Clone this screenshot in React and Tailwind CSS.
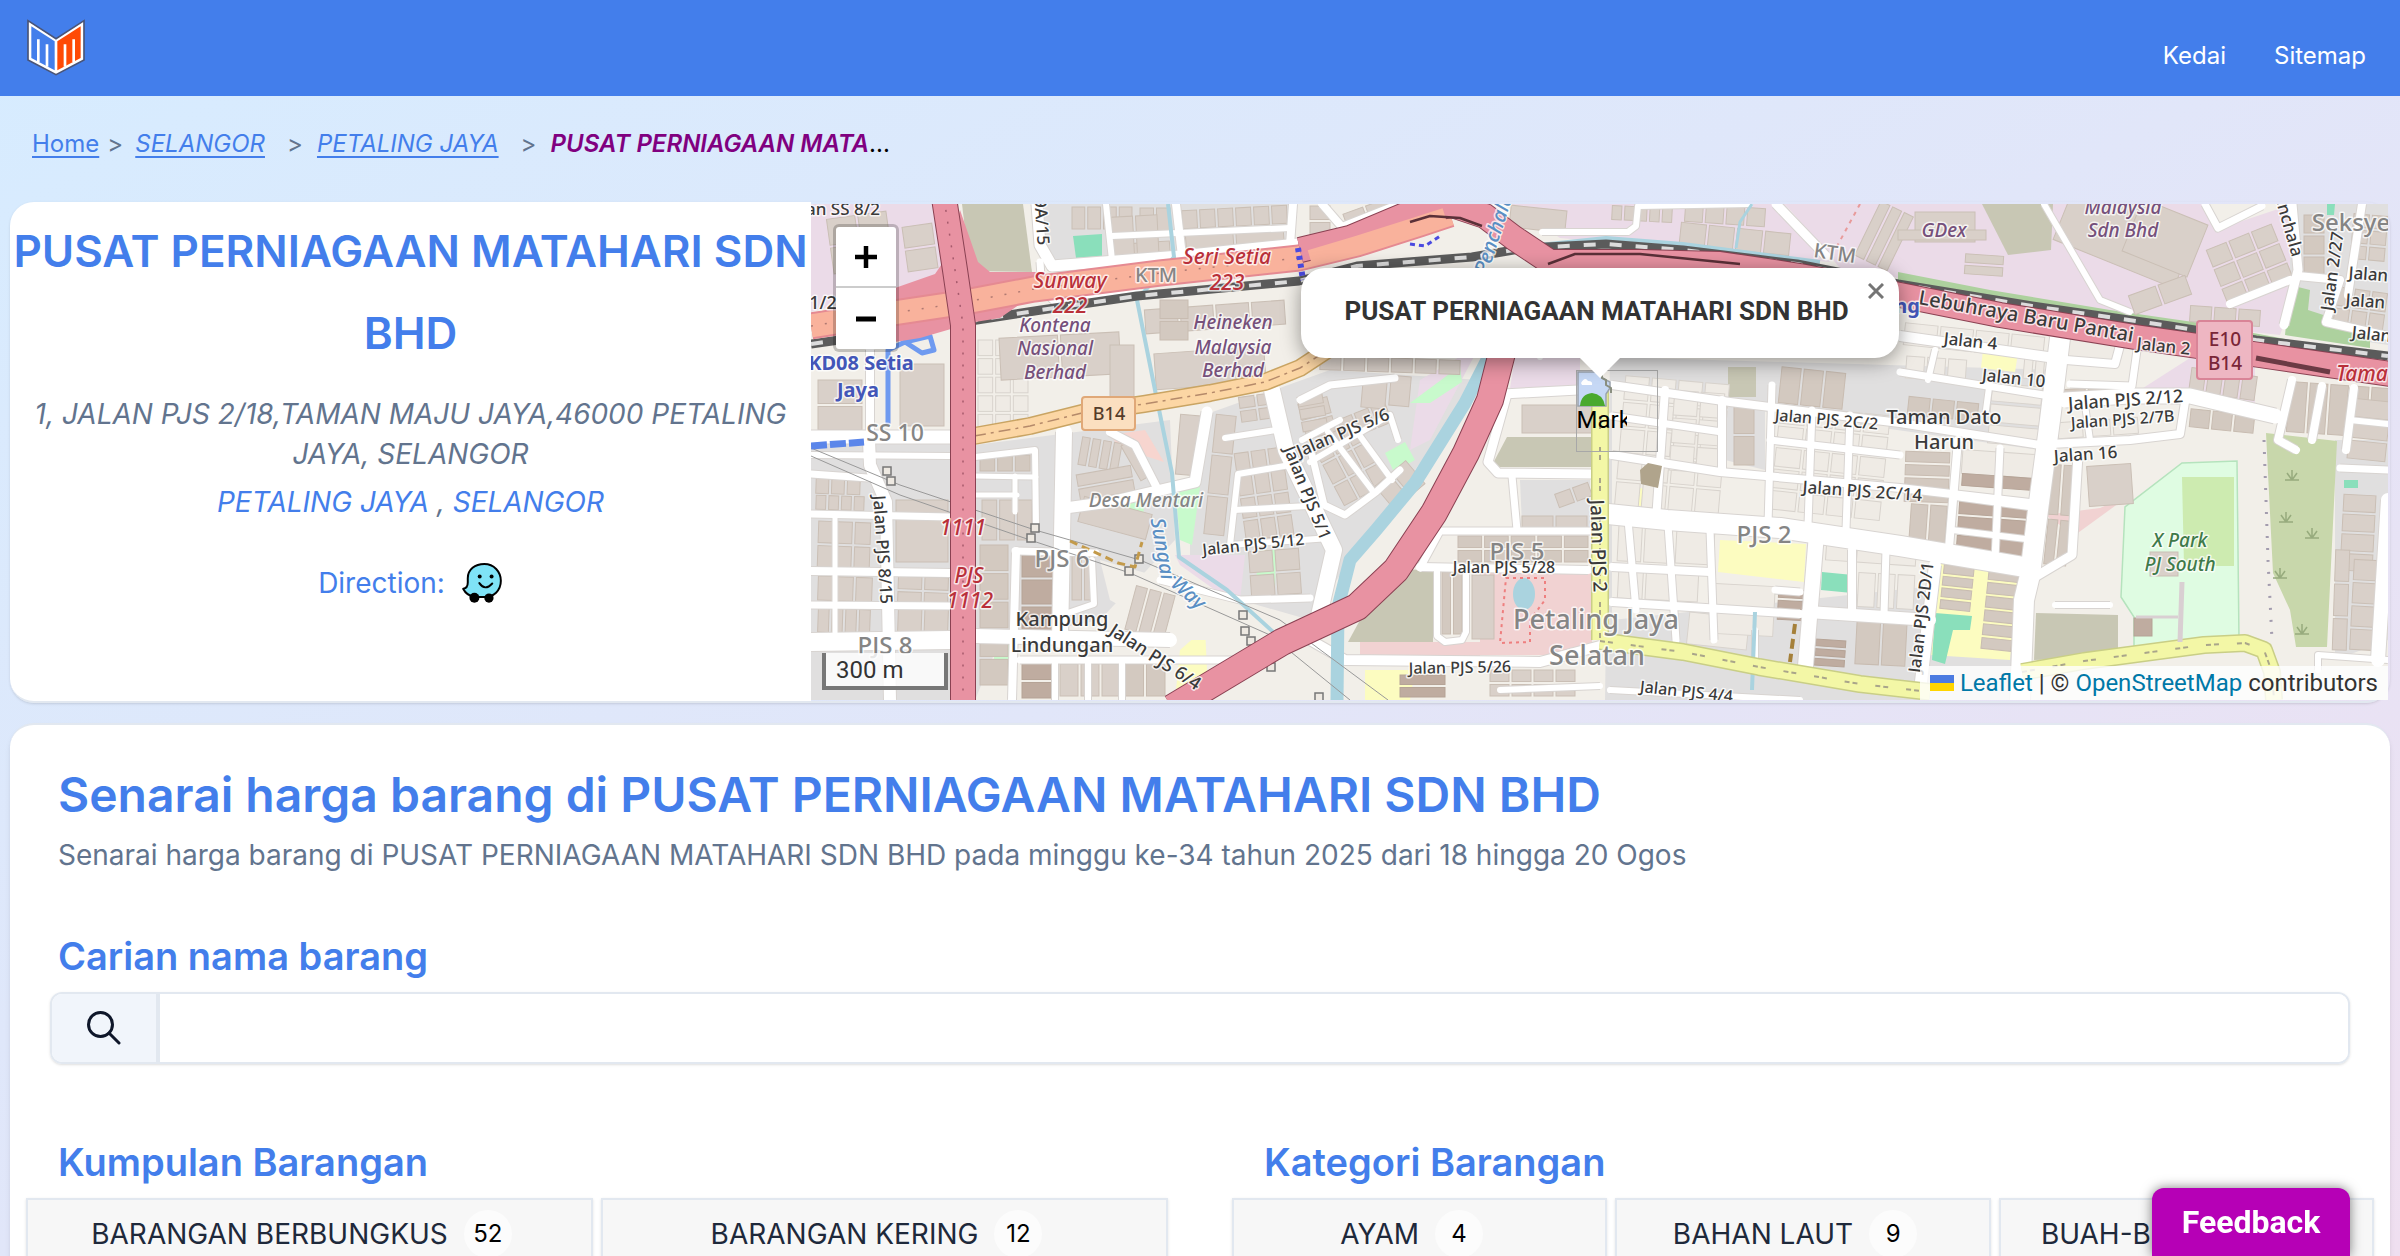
import React from "react";

/* ---------- map data: x,y are map units, the tile area spans 811..2388 by 204..700 ---------- */

const AREAS = [
  ["#e0dfdf", "811,440 950,440 950,700 811,700"],
  ["#e0dfdf", "975,445 1170,420 1175,540 1100,620 1000,640 975,700"],
  ["#e0dfdf", "1040,204 1290,204 1290,245 1045,265"],
  ["#e0dfdf", "1190,420 1330,370 1480,380 1350,560 1310,620 1240,600 1190,560"],
  ["#ebdbe8", "811,204 935,204 948,275 811,312"],
  ["#c8c7b4", "962,204 1023,204 1032,272 970,271"],
  ["#ebdbe8", "1510,204 1785,204 1830,262 1560,238"],
  ["#ebdbe8", "1785,204 2205,204 2215,230 2290,205 2300,280 2280,335 2185,325 2030,300 1840,268"],
  ["#ebdbe8", "2140,390 2190,358 2255,367 2255,405 2190,395"],
  ["#ebdbe8", "1420,380 1480,345 1430,440 1410,450"],
  ["#ebdbe8", "1515,357 1580,357 1580,387 1510,388"],
  ["#ebdbe8", "1175,555 1245,555 1240,600 1215,590 1180,565"],
  ["#e0dfdf", "1610,357 2060,370 2050,440 2030,560 2020,700 1605,700"],
  ["#f2efe9", "1612,390 2040,450 2030,560 1990,580 1612,620"],
  ["#e0dfdf", "2335,440 2388,440 2388,640 2335,660"],
  ["#e0dfdf", "2290,204 2388,204 2388,345 2290,330"],
  ["#e0dfdf", "1520,480 1590,480 1590,530 1522,525"],
  ["#f1d2d2", "1480,572 1592,572 1592,655 1480,655"],
  ["#f1d2d2", "1360,642 1480,642 1480,660 1360,660"],
  ["#f7d5cf", "1110,435 1145,430 1164,462 1120,448"],
  ["#f1d2d2", "2045,515 2100,508 2130,495 2075,535"],
  ["#e0dfdf", "1725,370 1765,372 1765,470 1725,460"],
  ["#fcfcc0", "1720,540 1806,544 1804,582 1718,572"],
  ["#fcfcc0", "1638,488 1663,490 1661,510 1635,505"],
  ["#fcfcc0", "1365,670 1415,670 1410,700 1365,700"],
  ["#fcfcc0", "1940,560 2018,570 2010,660 1930,655"],
  ["#fcfcc0", "1983,350 2018,353 2015,372 1981,368"],
  ["#fcfcc0", "1180,650 1205,628 1208,690 1175,700"],
  ["#c8facc", "1410,403 1460,366 1462,382 1430,403"],
  ["#c8facc", "1385,453 1405,442 1415,460 1394,472"],
  ["#c8facc", "1175,487 1200,487 1192,545 1180,540"],
  ["#c8facc", "1258,550 1276,550 1275,588 1256,586"],
  ["#c8facc", "994,638 1012,638 1013,670 994,668"],
  ["#c8facc", "1100,500 1145,492 1143,520 1100,507"],
  ["#8adfbb", "1073,236 1102,234 1102,256 1076,258"],
  ["#8adfbb", "1822,572 1853,575 1852,593 1821,590"],
  ["#8adfbb", "1935,613 1972,616 1970,630 1953,630 1945,664 1932,660"],
  ["#8adfbb", "2344,480 2358,480 2358,488 2344,488"],
  ["#8adfbb", "2327,204 2335,204 2334,215 2327,215"],
  ["#c8c7b4", "1507,437 1593,437 1593,467 1491,467"],
  ["#c8c7b4", "1388,569 1433,570 1433,642 1348,642"],
  ["#c8c7b4", "1982,204 2053,204 2051,250 2008,255"],
  ["#c8c7b4", "1728,367 1756,367 1756,397 1728,397"],
  ["#c8c7b4", "2036,613 2118,615 2118,657 2034,660"],
  ["#dffce2", "2182,463 2237,461 2239,640 2134,649 2134,617 2121,597 2125,507"],
  ["#cdebb0", "2182,477 2234,477 2234,566 2184,566"],
  ["#c8d7ab", "2266,433 2337,441 2327,647 2296,647 2290,610 2273,573"],
  ["#add19e", "2290,285 2310,290 2308,310 2370,330 2370,348 2285,335"],
  ["#add19e", "1898,272 1990,290 2110,310 2200,323 2290,340 2290,350 2130,322 1898,288"],
  ["#f2efe9", "1100,560 1170,580 1280,640 1180,640 1110,600"],
];

/* x, y, width, height, columns, rows, rotation, shade */
const BLOCKS = [
  [816, 478, 44, 16, 3, 1, 2], [816, 496, 48, 14, 4, 1, 2], [818, 522, 52, 46, 3, 2, 2], [896, 500, 52, 62, 1, 1, 0],
  [818, 577, 54, 24, 3, 1, 2], [898, 577, 50, 28, 2, 2, 2], [818, 609, 52, 24, 4, 1, 2], [898, 609, 50, 24, 2, 1, 2],
  [900, 364, 44, 62, 1, 1, 0], [818, 380, 44, 50, 1, 2, 0], [905, 225, 30, 45, 1, 2, -8], [830, 215, 60, 55, 2, 2, -8],
  [978, 340, 50, 90, 3, 5, 0, 3], [1000, 335, 120, 42, 2, 1, -3], [1110, 345, 24, 60, 1, 1, 0], [1145, 305, 140, 24, 4, 1, -4],
  [1155, 350, 110, 36, 1, 1, -4], [1160, 300, 28, 40, 1, 2, 0, 2],
  [1072, 207, 60, 22, 4, 1, 0], [1110, 243, 60, 18, 4, 1, -4], [1140, 208, 30, 24, 2, 1, 0], [1112, 216, 46, 40, 2, 2, -3],
  [1182, 208, 105, 18, 6, 1, -3], [1186, 232, 98, 20, 2, 1, -4],
  [1080, 440, 40, 28, 4, 1, 10], [1078, 470, 55, 26, 1, 2, -10], [1130, 440, 14, 40, 1, 1, -30], [1178, 415, 20, 60, 1, 1, 5],
  [980, 455, 50, 16, 3, 1, 0, 2], [982, 500, 50, 40, 3, 1, 0], [980, 545, 28, 140, 1, 5, 0, 2], [1080, 505, 70, 26, 1, 1, 15],
  [1022, 553, 32, 78, 1, 3, 0, 1], [1072, 556, 22, 44, 2, 1, 0], [1022, 664, 30, 34, 1, 2, 0, 1],
  [1060, 664, 60, 32, 3, 1, 0], [1125, 664, 40, 32, 2, 1, 0, 2], [1130, 590, 40, 45, 3, 1, 15],
  [1240, 395, 34, 25, 2, 2, -8], [1210, 415, 20, 120, 1, 3, 6], [1240, 450, 48, 88, 3, 4, -8], [1302, 400, 30, 36, 1, 2, -15],
  [1250, 550, 50, 45, 2, 2, -4], [1325, 428, 50, 70, 3, 3, -28], [1340, 410, 50, 22, 3, 1, -22], [1380, 470, 40, 30, 2, 1, -40],
  [1300, 395, 25, 35, 1, 3, -10], [1362, 380, 24, 28, 1, 1, 5], [1390, 376, 20, 30, 1, 1, 5], [1320, 358, 140, 14, 6, 1, 2],
  [1522, 405, 70, 28, 1, 1, 0], [1556, 488, 35, 14, 2, 1, -20], [1522, 516, 65, 12, 2, 1, 0], [1458, 536, 130, 26, 5, 2, 0, 2],
  [1472, 575, 22, 64, 1, 1, 0], [1442, 572, 20, 62, 2, 1, 0, 2], [1400, 675, 45, 22, 1, 2, 0, 1], [1490, 670, 85, 26, 4, 2, 0],
  [1620, 380, 104, 130, 4, 5, 5, 3], [1672, 392, 50, 80, 2, 3, 4, 3], [1734, 405, 20, 60, 1, 2, 0, 2], [1780, 370, 64, 36, 3, 1, 6, 2],
  [1775, 410, 110, 105, 4, 5, 6, 3], [1618, 526, 50, 36, 2, 1, 3, 3], [1676, 530, 38, 34, 1, 1, 3, 3], [1618, 572, 80, 28, 3, 1, 3, 3],
  [1688, 615, 60, 32, 1, 1, 6, 3], [1714, 585, 60, 50, 1, 1, 3, 3], [1778, 590, 26, 30, 1, 3, 3, 1], [1826, 545, 90, 18, 3, 1, 4, 3],
  [1858, 574, 56, 34, 3, 1, 3, 3], [1815, 640, 30, 26, 1, 3, 4, 1], [1856, 620, 50, 45, 2, 1, 3, 2],
  [1904, 330, 140, 22, 4, 1, 6, 3], [1906, 358, 60, 22, 3, 1, 4, 3], [2024, 355, 20, 24, 2, 1, 5, 3], [1990, 385, 50, 60, 1, 3, 5, 3],
  [1908, 400, 70, 18, 3, 1, 6, 2], [1962, 452, 74, 24, 2, 1, 4, 3], [1962, 476, 74, 12, 2, 1, 4, 1], [1958, 500, 74, 54, 2, 3, 4, 1],
  [1905, 452, 44, 50, 1, 4, 2, 2], [1910, 505, 36, 40, 2, 1, 4, 2], [1942, 566, 30, 44, 1, 4, 6, 2], [1985, 570, 30, 80, 1, 6, 6, 2],
  [2050, 465, 22, 50, 2, 1, 4, 2], [2046, 520, 22, 45, 2, 1, 6, 2], [2068, 335, 50, 26, 1, 1, 4, 3], [2062, 388, 50, 12, 2, 1, -4, 2],
  [2088, 465, 44, 40, 1, 1, -4], [2058, 420, 80, 16, 3, 1, -4, 3], [2190, 412, 64, 18, 3, 1, 6, 2], [2190, 372, 66, 24, 4, 1, 8],
  [2288, 385, 100, 50, 5, 1, 4, 2], [2342, 495, 32, 76, 1, 4, 3], [2350, 400, 38, 60, 1, 3, 6], [2334, 550, 14, 100, 1, 3, 2], [2352, 560, 26, 90, 1, 4, 3],
  [1510, 208, 56, 22, 1, 1, 6], [1612, 207, 60, 14, 5, 1, 3], [1680, 228, 110, 22, 4, 1, 6], [1685, 206, 80, 18, 4, 1, 4],
  [1866, 206, 36, 60, 3, 1, 26], [1915, 212, 60, 30, 1, 1, 0], [1898, 230, 88, 10, 1, 1, 0], [1965, 255, 38, 20, 1, 2, 4],
  [2060, 204, 130, 62, 1, 1, 22], [2130, 210, 70, 56, 1, 1, 22], [2130, 285, 60, 20, 2, 1, -20], [2215, 235, 70, 60, 3, 3, -22],
  [2190, 308, 70, 16, 3, 1, 4], [2304, 215, 20, 60, 1, 3, 0, 2], [2352, 215, 34, 45, 2, 3, 5], [2335, 290, 50, 40, 3, 2, 8],
  [1310, 206, 20, 30, 1, 2, 0], [1345, 206, 45, 20, 2, 1, -20], [2134, 618, 18, 18, 1, 1, 0, 1], [2150, 552, 28, 24, 1, 1, 0],
];

const ROADS = [
  [13, "811,437 950,437"], [6, "811,455 950,456"], [12, "869,440 870,465 886,502 890,700"], [7, "811,474 868,478"], [7, "811,514 950,517"],
  [8, "811,571 950,573"], [7, "811,605 950,606"], [18, "811,642 950,640"], [8, "870,350 870,437"], [5, "835,514 835,640"],
  [11, "1037,204 1040,245 1052,266 1180,256 1298,244"], [7, "1040,262 1042,290 1055,302 1137,290"], [6, "1106,204 1112,260"], [8, "1176,204 1182,256"],
  [8, "1293,204 1290,245"], [6, "1112,236 1290,228"], [6, "975,457 1035,450 1036,525"], [5, "975,476 1036,477"], [5, "1015,476 1015,512"], [5, "975,495 1017,495"],
  [16, "1064,432 1060,640"], [11, "1065,508 1110,502 1195,482 1207,412"], [8, "1110,432 1135,445 1156,486"], [16, "1272,390 1286,450 1334,550 1318,620"],
  [6, "1225,438 1276,430"], [6, "1290,465 1238,474 1230,545 1330,538"], [6, "1302,440 1340,420"], [7, "1300,400 1330,385 1395,378"],
  [6, "1234,510 1308,506"], [7, "1015,551 1096,553"], [8, "1016,551 1012,700"], [6, "1092,560 1094,604 1062,615"], [14, "975,636 1170,640"],
  [7, "1020,660 1240,660"], [6, "1055,660 1055,700"], [6, "1088,660 1088,700"], [6, "1122,660 1122,700"], [7, "1160,580 1240,600 1310,598"],
  [7, "1312,455 1324,505 1345,515 1376,492 1400,470"], [6, "1328,432 1372,490"], [6, "1352,425 1392,480"], [6, "1310,462 1390,415 1398,440"],
  [9, "1503,394 1578,390"], [9, "1507,394 1488,462 1498,473 1592,474"], [7, "1512,476 1517,530"], [7, "1420,568 1440,531 1590,531"], [8, "1420,567 1588,570"],
  [6, "1437,570 1437,636 1445,642 1462,640 1466,632 1466,570"], [10, "1310,640 1345,660 1540,662 1600,646"], [6, "1500,690 1600,686"],
  [20, "1608,514 1667,520 1780,528 1900,546 2030,568"], [8, "1612,455 1720,472 1900,488 2030,503"], [8, "1612,385 1730,402 1900,423 2040,445"],
  [7, "1612,416 1722,432"], [7, "1770,440 1900,455"], [8, "1612,567 1710,572"], [8, "1612,602 1800,614"], [8, "1665,390 1656,520"], [7, "1628,520 1636,610"],
  [7, "1668,525 1676,640"], [8, "1722,400 1722,470"], [7, "1772,385 1768,525"], [7, "1812,410 1808,525"], [7, "1850,415 1846,530"], [15, "1816,540 1805,672"],
  [7, "1710,530 1714,640"], [7, "1775,590 1800,592"], [12, "1808,612 1930,620"], [8, "1852,550 1852,614"], [7, "1886,550 1884,614"], [6, "1755,630 1755,672"],
  [20, "2060,338 2050,420 2038,510 2030,575 2024,600 2020,700"], [10, "1900,336 2055,358"], [7, "1900,372 2050,396"], [6, "1990,380 1986,410"],
  [8, "1958,440 1948,560"], [7, "2000,448 1995,560"], [6, "1955,497 2036,508"], [6, "1952,530 2034,540"], [6, "1935,350 1928,380"], [12, "1935,565 1920,690"],
  [8, "2066,360 2115,364 2122,338"], [7, "2137,350 2132,386 2070,384"], [15, "2065,400 2130,396 2190,396 2275,416"], [8, "2050,444 2130,440 2180,434 2185,402"],
  [6, "2085,405 2090,440"], [9, "2078,455 2072,555 2030,580"], [8, "2292,380 2278,440 2296,450"], [8, "2322,386 2312,440"], [8, "2354,388 2346,450"],
  [6, "2350,420 2388,424"], [7, "2340,468 2388,470"], [14, "2388,500 2378,660"], [6, "2318,670 2318,655 2388,660"],
  [7, "2205,204 2218,228 2262,206"], [9, "2292,204 2298,270 2284,325"], [8, "2298,276 2340,280 2326,322 2388,336"], [8, "2230,304 2290,280"], [8, "2362,204 2348,295"],
  [6, "1542,232 1628,232 1636,226 1638,206 1750,204"], [9, "1776,204 1826,256"], [8, "1322,204 1342,227 1400,204"], [6, "2044,204 2100,300 2130,312"],
  [6, "1540,350 1540,357"], [6, "1610,690 1800,700"], [6, "2055,605 2110,605"],
];

const HW_PINK = [
  [26, "1172,708 1282,642 1357,607 1396,570 1434,513 1466,453 1490,400 1504,345 1525,280"],
  [24, "1300,250 1350,238 1412,212 1452,205 1485,216 1514,238 1550,262 1640,262 1720,264 1800,276 1900,295 2000,315 2135,337 2239,352 2390,374"],
  [24, "944,198 955,270 963,325 963,540 963,706"],
];
const RAIL = "811,344 951,324 1041,310 1137,296 1299,281 1357,266 1472,257 1526,248 1606,244 1683,250 1797,264 1898,284 2032,306 2170,326 2256,340 2388,356";

const C = { dark: "#3a3a3a", gray: "#858585", blue: "#4356b8", red: "#b9303a", purple: "#75507b", water: "#5a8fc4", green: "#3f7a4a" };

/* text, x, baseline y, size, colour, rotation, italic, weight */
const LABELS = [
  ["an SS 8/2", 843, 215, 17, C.dark], ["1/2", 823, 309, 18, C.dark],
  ["Sunway", 1070, 288, 21, C.red, 0, 1], ["222", 1070, 313, 21, C.red, 0, 1], ["Seri Setia", 1227, 264, 21, C.red, 0, 1], ["223", 1227, 290, 21, C.red, 0, 1],
  ["KTM", 1156, 282, 20, C.gray], ["Kontena", 1055, 332, 19, C.purple, 0, 1], ["Nasional", 1055, 355, 19, C.purple, 0, 1], ["Berhad", 1055, 379, 19, C.purple, 0, 1],
  ["Heineken", 1233, 329, 19, C.purple, 0, 1], ["Malaysia", 1233, 354, 19, C.purple, 0, 1], ["Berhad", 1233, 377, 19, C.purple, 0, 1],
  ["KD08 Setia", 861, 370, 20, C.blue, 0, 0, 700], ["Jaya", 858, 397, 20, C.blue, 0, 0, 700], ["SS 10", 895, 441, 23, C.gray],
  ["Jalan PJS 8/15", 877, 550, 17, C.dark, 86], ["9A/15", 1036, 222, 17, C.dark, 86], ["1111", 963, 535, 21, C.red, 0, 1], ["PJS", 969, 583, 21, C.red, 0, 1], ["1112", 970, 608, 21, C.red, 0, 1],
  ["Desa Mentari", 1146, 507, 19, C.gray, 0, 1], ["PJS 6", 1062, 567, 24, C.gray], ["Sungai", 1156, 550, 20, C.water, 80, 1], ["Way", 1184, 598, 20, C.water, 42, 1],
  ["Jalan PJS 5/12", 1254, 550, 16, C.dark, -6], ["Jalan PJS 5/1", 1302, 495, 17, C.dark, 68], ["Jalan PJS 5/6", 1345, 438, 17, C.dark, -23],
  ["Kampung", 1062, 626, 20, C.dark], ["Lindungan", 1062, 652, 20, C.dark], ["Jalan PJS 6/4", 1152, 662, 18, C.dark, 33], ["PJS 8", 885, 654, 24, C.gray],
  ["PJS 5", 1517, 560, 24, C.gray], ["Jalan PJS 5/28", 1504, 573, 16, C.dark], ["Jalan PJS 2", 1592, 546, 19, C.dark, 88],
  ["Petaling Jaya", 1596, 629, 27, C.gray], ["Selatan", 1597, 665, 27, C.gray], ["Jalan PJS 5/26", 1460, 673, 16, C.dark, -1], ["Jalan PJS 4/4", 1686, 697, 16, C.dark, 6],
  ["PJS 2", 1764, 543, 24, C.gray], ["Jalan PJS 2C/2", 1826, 425, 16, C.dark, 5], ["Jalan PJS 2C/14", 1862, 497, 17, C.dark, 4], ["KTM", 1834, 260, 20, C.gray, 8],
  ["Penchala", 1500, 236, 20, C.water, -72, 1], ["GDex", 1944, 237, 19, C.purple, 0, 1], ["Malaysia", 2123, 214, 19, C.purple, 0, 1], ["Sdn Bhd", 2123, 237, 19, C.purple, 0, 1],
  ["Lebuhraya Baru Pantai", 2025, 323, 20, C.dark, 10], ["ng", 1907, 313, 20, C.blue, 0, 0, 700], ["Jalan 4", 1970, 347, 17, C.dark, 6], ["Jalan 10", 2013, 384, 17, C.dark, 6],
  ["Jalan 2", 2163, 352, 17, C.dark, 6], ["Taman Dato", 1944, 424, 20, C.dark], ["Harun", 1944, 449, 20, C.dark], ["Jalan PJS 2/12", 2126, 406, 18, C.dark, -4],
  ["Jalan PJS 2/7B", 2123, 425, 16, C.dark, -4], ["Jalan 16", 2086, 460, 17, C.dark, -4], ["X Park", 2180, 547, 19, C.green, 0, 1], ["PJ South", 2180, 571, 19, C.green, 0, 1],
  ["Jalan PJS 2D/1", 1927, 618, 17, C.dark, -83], ["Seksye", 2351, 231, 24, C.gray], ["Penchala", 2282, 222, 17, C.dark, 74], ["Jalan 2/27", 2338, 272, 17, C.dark, -82],
  ["Jalan", 2368, 280, 17, C.dark, 4], ["Jalan", 2365, 307, 17, C.dark, 4], ["Jalan", 2371, 340, 17, C.dark, 6], ["Tama", 2362, 381, 21, C.red, 0, 1],
];

const SHADES = {
  0: ["#d9d0c9", "#cabfb5"],
  1: ["#bfaca0", "#b5a396"],
  2: ["#d3c9c0", "#c8bcb1"],
  3: ["#efebe5", "#d8d3cd"],
};

function Block({ data }) {
  const [x, y, w, h, cols, rows, rot = 0, shade = 0] = data;
  const gap = 3;
  const cw = (w - gap * (cols - 1)) / cols;
  const ch = (h - gap * (rows - 1)) / rows;
  const cells = [];
  for (let r = 0; r < rows; r++)
    for (let c = 0; c < cols; c++)
      cells.push(<rect key={r + "-" + c} x={x + c * (cw + gap)} y={y + r * (ch + gap)} width={cw} height={ch} />);
  return (
    <g fill={SHADES[shade][0]} stroke={SHADES[shade][1]} transform={`rotate(${rot} ${x + w / 2} ${y + h / 2})`}>
      {cells}
    </g>
  );
}

function Line({ pts, ...rest }) {
  return <polyline points={pts} fill="none" strokeLinejoin="round" {...rest} />;
}

function Pylon({ x, y }) {
  return <rect x={x - 4} y={y - 4} width="8" height="8" fill="#eee9e2" stroke="#777" strokeWidth="1.5" />;
}

function StreetMap() {
  const orange = "811,326 900,312 960,303 1034,289 1160,273 1299,258 1357,244 1420,224 1450,214";
  const b14 = "974,436 1030,426 1082,413 1144,404 1210,393 1265,382 1300,368 1335,345 1370,320";
  const yellow = ["1600,385 1600,640", "1600,641 1683,652 1759,667 1860,684 1930,692", "2022,672 2084,661 2204,645 2245,643 2264,650 2272,672 2274,700"];
  return (
    <svg viewBox="811 204 1577 496" preserveAspectRatio="xMidYMid slice" className="absolute inset-0 h-full w-full" role="img" aria-label="Map" fontFamily="'Noto Sans', sans-serif">
      <rect x="811" y="204" width="1577" height="496" fill="#f2efe9" />
      {AREAS.map(([f, p], i) => <polygon key={i} points={p} fill={f} />)}
      <polygon points="2182,463 2237,461 2239,640 2134,649 2134,617 2121,597 2125,507" fill="none" stroke="#b5e3bd" strokeWidth="1.5" />
      {BLOCKS.map((b, i) => <Block key={i} data={b} />)}
      {ROADS.map(([w, p], i) => <Line key={i} pts={p} stroke="#d8d4d1" strokeWidth={w + 2} />)}
      {ROADS.map(([w, p], i) => <Line key={i} pts={p} stroke="#fff" strokeWidth={w} strokeLinecap="round" />)}

      <ellipse cx="1524" cy="594" rx="11" ry="16" fill="#aad3df" />
      <polygon points="1506,578 1545,578 1545,600 1530,620 1530,642 1500,643" fill="none" stroke="#ee7f7f" strokeWidth="2" strokeDasharray="3 4" />
      <Line pts="1500,330 1487,360 1465,403 1415,483 1376,530 1350,560 1338,607 1337,700" stroke="#aad3df" strokeWidth="13" />
      <Line pts="1168,204 1174,257 1137,300 1155,390 1172,473 1179,557 1227,590 1282,640" stroke="#aad3df" strokeWidth="4" />
      <Line pts="1530,246 1606,238 1683,244 1820,262" stroke="#aad3df" strokeWidth="4" />
      <Line pts="1752,204 1740,222 1736,248" stroke="#aad3df" strokeWidth="3" />
      <Line pts="1755,612 1752,690" stroke="#aad3df" strokeWidth="4" />
      <Line pts="1860,204 1835,250" stroke="#e89a9a" strokeWidth="2" strokeDasharray="4 5" />

      <Line pts="811,448 900,485 1035,530 1140,560 1280,620 1388,700" stroke="#999" strokeWidth="1" />
      <Line pts="811,456 900,495 1030,540 1130,573 1270,635 1350,700" stroke="#999" strokeWidth="1" />
      {[[887, 471], [891, 481], [1035, 528], [1031, 538], [1139, 559], [1129, 571], [1243, 615], [1245, 631], [1251, 641], [1271, 667], [1319, 697]].map(([x, y]) => <Pylon key={x} x={x} y={y} />)}
      <Line pts="1070,541 1090,550 1118,563 1135,567 1142,542" stroke="#c39a4a" strokeWidth="3" strokeDasharray="8 5" />
      <Line pts="1795,624 1790,662" stroke="#a5803a" strokeWidth="4" strokeDasharray="10 5" />

      <Line pts="811,446 864,442" stroke="#5b86ea" strokeWidth="7" strokeDasharray="16 3" />
      <Line pts="888,424 888,350 905,342 930,336 934,350 922,353 905,342" stroke="#6f9af0" strokeWidth="5" />

      <Line pts={RAIL} stroke="#5b5b5b" strokeWidth="9" />
      <Line pts={RAIL} stroke="#dcdcdc" strokeWidth="4" strokeDasharray="12 14" />

      {yellow.map((p) => <Line key={p} pts={p} stroke="#c9ce86" strokeWidth="18" />)}
      {yellow.map((p) => <Line key={p} pts={p} stroke="#f3f7a6" strokeWidth="15" />)}
      {yellow.map((p) => <Line key={p} pts={p} stroke="#a9a58a" strokeWidth="2" strokeDasharray="5 3 5 18" />)}

      <Line pts={b14} stroke="#c9a463" strokeWidth="18" />
      <Line pts={b14} stroke="#fcd6a4" strokeWidth="15" />
      <Line pts={b14} stroke="#b58a6a" strokeWidth="1.5" strokeDasharray="12 5 3 5" />

      <polygon points="895,288 935,274 948,255 960,210 978,262 990,272 1040,272 1040,290 1000,318 975,322 920,338 895,342" fill="#e892a2" />
      <Line pts={orange} stroke="#e58a92" strokeWidth="27" />
      <Line pts={orange} stroke="#f9b29c" strokeWidth="23" />
      <Line pts={orange} stroke="#b07a72" strokeWidth="1.5" strokeDasharray="2 12" />
      {HW_PINK.map(([w, p]) => <Line key={p} pts={p} stroke="#8a4152" strokeWidth={w + 2} />)}
      {HW_PINK.map(([w, p]) => <Line key={p} pts={p} stroke="#e892a2" strokeWidth={w} />)}
      <Line pts="1310,258 1357,244 1410,227 1445,216" stroke="#f9b29c" strokeWidth="16" />
      <Line pts={HW_PINK[2][1]} stroke="#a55a6c" strokeWidth="1.5" strokeDasharray="2 10" />
      <Line pts="1410,222 1430,216 1460,218 1482,226" stroke="#5a3038" strokeWidth="2.5" />
      <Line pts="1548,264 1575,254 1640,254 1740,264" stroke="#5a3038" strokeWidth="2.5" />
      <Line pts="2256,358 2330,372" stroke="#6b3a44" strokeWidth="5" />
      <Line pts="1410,244 1425,246 1440,236" stroke="#4a4ae0" strokeWidth="3" strokeDasharray="5 4" />
      <Line pts="1298,248 1303,280" stroke="#4a4ae0" strokeWidth="6" strokeDasharray="4 4" />

      <Line pts="2264,440 2268,560 2272,640" stroke="#a39cae" strokeWidth="3" strokeDasharray="2 10" />
      <Line pts="2182,582 2180,642" stroke="#d9cfd2" strokeWidth="5" />
      <Line pts="2136,617 2178,617" stroke="#d9cfd2" strokeWidth="3" />
      {[[2292, 480], [2286, 522], [2312, 538], [2280, 578], [2302, 634]].map(([x, y]) => (
        <path key={x} d={`M${x - 7} ${y}h14M${x} ${y}v-10M${x} ${y}l-5 -7M${x} ${y}l5 -7`} stroke="#97ab7d" strokeWidth="1.5" fill="none" />
      ))}
      <polygon points="1640,470 1648,463 1662,466 1658,488 1641,484" fill="#b0a48c" />

      {LABELS.map(([t, x, y, s, fill, rot = 0, it = 0, w = 500], i) => (
        <text key={i} x={x} y={y} fontSize={s} fill={fill} textAnchor="middle" fontStyle={it ? "italic" : "normal"} fontWeight={w}
          stroke="#fff" strokeOpacity="0.75" strokeWidth="3" strokeLinejoin="round" paintOrder="stroke" transform={`rotate(${rot} ${x} ${y})`}>{t}</text>
      ))}
      <rect x="1082" y="397" width="53" height="33" rx="3" fill="#fbdfc0" stroke="#e0a878" strokeWidth="2" />
      <text x="1109" y="420" fontSize="18" fontWeight="500" fill="#553c2a" textAnchor="middle">B14</text>
      <rect x="2197" y="321" width="55" height="58" rx="3" fill="#eeb6c2" stroke="#d98497" strokeWidth="2" />
      <text x="2225" y="346" fontSize="19" fontWeight="500" fill="#7a2638" textAnchor="middle">E10</text>
      <text x="2225" y="370" fontSize="19" fontWeight="500" fill="#7a2638" textAnchor="middle">B14</text>
    </svg>
  );
}

function MapPanel() {
  return (
    <div className="relative isolate mb-px mr-[2px] mt-[2px] overflow-hidden font-['Roboto',sans-serif] text-[#333]">
      <StreetMap />

      <div className="absolute left-[22px] top-[20px] flex flex-col overflow-hidden rounded-md border-[3px] border-black/20 bg-white bg-clip-padding">
        <button aria-label="Zoom in" className="flex h-[61px] w-[60px] items-center justify-center border-b-2 border-[#ccc] text-black">
          <svg viewBox="0 0 24 24" className="h-6 w-6"><path d="M12 1v22M1 12h22" stroke="currentColor" strokeWidth="4.5" /></svg>
        </button>
        <button aria-label="Zoom out" className="flex h-[61px] w-[60px] items-center justify-center text-black">
          <svg viewBox="0 0 24 24" className="h-6 w-6"><path d="M2 12h20" stroke="currentColor" strokeWidth="5" /></svg>
        </button>
      </div>

      <div className="absolute bottom-[10px] left-[11px] h-[37px] w-[126px] border-4 border-t-0 border-[#777] bg-white/80 pl-[10px] text-2xl leading-[34px] text-[#333]">300 m</div>

      <div className="absolute bottom-0 right-0 flex h-[34px] items-center bg-white/80 px-[10px] text-2xl leading-[34px]">
        <svg viewBox="0 0 12 8" className="mr-[6px] h-4 w-6"><path fill="#4C7BE1" d="M0 0h12v4H0z" /><path fill="#FFD500" d="M0 4h12v4H0z" /></svg>
        <a href="#leaflet" className="text-[#0078A8]">Leaflet</a>
        <span className="whitespace-pre"> | © </span>
        <a href="#osm" className="text-[#0078A8]">OpenStreetMap</a>
        <span className="whitespace-pre"> contributors</span>
      </div>

      <div className="absolute left-1/2 top-[166px] -ml-[24px] h-[82px] w-[82px] border border-[#a8a8a8]">
        <svg viewBox="0 0 36 36" className="h-9 w-9">
          <path d="M1 1h24v6l8 4v6l-4 6v12H1z" fill="#c6d8f5" stroke="#9aa3ad" strokeWidth="1.5" />
          <path d="M4 12q4 -7 7 -2q5 0 4 4H5z" fill="#fff" />
          <path d="M3 35q1 -12 12 -13q11 1 13 13z" fill="#4aa92d" />
          <path d="M25 1v6l4 2v5l5 3v5" fill="none" stroke="#8a8f80" strokeWidth="2" />
        </svg>
        <span className="block w-[50px] overflow-hidden text-2xl leading-[26px] text-black">Marker</span>
      </div>

      <div className="absolute left-1/2 top-[64px] z-10 -translate-x-1/2">
        <div className="relative z-10 flex h-[90px] w-[598px] items-center justify-center rounded-3xl bg-white pr-[6px] shadow-[0_4px_20px_rgba(0,0,0,0.4)]">
          <b className="whitespace-nowrap pb-1 text-[26px] leading-8">PUSAT PERNIAGAAN MATAHARI SDN BHD</b>
          <button aria-label="Close popup" className="absolute right-[15px] top-[15px] text-[#757575]">
            <svg viewBox="0 0 16 16" className="h-4 w-4"><path d="M1 1l14 14M15 1L1 15" stroke="currentColor" strokeWidth="3" fill="none" /></svg>
          </button>
          <svg viewBox="0 0 40 20" className="absolute left-1/2 top-full h-5 w-10 -translate-x-1/2"><path d="M0 0h40L20 20z" fill="#fff" /></svg>
        </div>
      </div>
    </div>
  );
}

function Logo() {
  return (
    <svg viewBox="0 0 216 198" className="h-[66px] w-[72px]" aria-label="Home">
      <path d="M24 26L108 80L192 26V144L108 188L24 144Z" fill="#fff" stroke="#4a5578" strokeWidth="5" />
      <path d="M34 43L104 88V175L34 138Z" fill="#437eeb" />
      <path d="M112 88L182 43V138L112 175Z" fill="#ff4a05" />
      <path d="M55 82V150M81 97V164M135 97V164M161 82V150" stroke="#fff" strokeWidth="8" />
    </svg>
  );
}

function Waze() {
  return (
    <svg viewBox="64 60 126 130" className="h-[43px] w-[42px]" aria-label="Waze">
      <path d="M84 112C84 85 106 69 134 69C163 69 184 92 184 120C184 150 162 169 134 169L105 169C88 166 76 156 70 144C80 143 84 137 84 125Z" fill="#7fe3f7" stroke="#000" strokeWidth="6" strokeLinejoin="round" />
      <circle cx="104" cy="171" r="15" /><circle cx="148" cy="172" r="14" />
      <circle cx="120" cy="107" r="6" /><circle cx="156" cy="107" r="6" />
      <path d="M119 127Q136 152 158 128" fill="none" stroke="#000" strokeWidth="6" strokeLinecap="round" />
    </svg>
  );
}

function Group({ title, items, cols }) {
  return (
    <section className="min-w-0 flex-1">
      <h3 className="pl-8 text-[38px] font-semibold leading-[56px] text-[#437eeb]">{title}</h3>
      <div className={"mt-2 grid gap-x-2 gap-y-2 " + cols}>
        {items.map(([name, n]) => (
          <button key={name} className="flex h-[72px] items-center justify-center gap-4 border-2 border-[#e2e8f0] bg-[#f7f7f7] pr-4 text-[28px] text-[#1e293b] shadow-sm">
            {name}
            <span className="flex h-12 min-w-12 items-center justify-center rounded-full bg-[#fcfcfc] text-2xl text-black">{n}</span>
          </button>
        ))}
      </div>
    </section>
  );
}

export default function App() {
  const crumb = "text-[#437eeb] underline underline-offset-4";
  return (
    <div className="h-screen overflow-hidden bg-gradient-to-br from-[#d6ecff] via-[#e1e6f9] to-[#efdff0] font-['Inter',sans-serif]">
      <header className="flex h-24 items-start justify-between bg-[#437eeb] pl-5 pr-[34px] pt-3">
        <a href="#home"><Logo /></a>
        <nav className="flex gap-12 pt-[26px] text-2xl leading-9 text-white">
          <a href="#kedai">Kedai</a>
          <a href="#sitemap">Sitemap</a>
        </nav>
      </header>

      <nav aria-label="Breadcrumb" className="flex h-[106px] items-start pl-8 pt-[30px] text-2xl leading-9 text-slate-500">
        <a href="#home" className={crumb}>Home</a>
        <span className="mx-2 w-[20px]">&gt;</span>
        <a href="#selangor" className={crumb + " italic"}>SELANGOR</a>
        <span className="ml-[22px] mr-3 w-[18px]">&gt;</span>
        <a href="#pj" className={crumb + " italic"}>PETALING JAYA</a>
        <span className="ml-[22px] mr-3 w-[18px]">&gt;</span>
        <span className="text-black"><b className="font-semibold italic text-[#800080]">PUSAT PERNIAGAAN MATA</b>...</span>
      </nav>

      <main className="flex flex-col gap-5 px-[10px]">
        <section className="grid h-[501px] grid-cols-[minmax(801px,1fr)_2fr] rounded-3xl border-b-2 border-[#e2e8f0] bg-[linear-gradient(90deg,#fff_801px,transparent_801px)] shadow-sm">
          <div className="flex flex-col items-center pt-2 text-center text-[28px] text-slate-500">
            <h1 className="text-[44px] font-semibold leading-[82px] text-[#437eeb]">PUSAT PERNIAGAAN MATAHARI SDN BHD</h1>
            <address className="mt-5 px-5 italic leading-[40px]">1, JALAN PJS 2/18,TAMAN MAJU JAYA,46000 PETALING JAYA, SELANGOR</address>
            <p className="mt-2 italic leading-[40px]">
              <a href="#pj" className="text-[#437eeb]">PETALING JAYA</a> , <a href="#selangor" className="text-[#437eeb]">SELANGOR</a>
            </p>
            <p className="mt-[39px] flex items-center gap-4 leading-[42px] text-[#437eeb]">
              Direction: <a href="#waze"><Waze /></a>
            </p>
          </div>
          <MapPanel />
        </section>

        <section className="rounded-3xl border-t-2 border-[#e2e8f0] bg-white px-4 shadow-md">
          <h2 className="pl-8 pt-[34px] text-[48px] font-semibold leading-[72px] text-[#437eeb]">Senarai harga barang di PUSAT PERNIAGAAN MATAHARI SDN BHD</h2>
          <p className="pl-8 pt-[3px] text-[28px] leading-[42px] text-slate-500">Senarai harga barang di PUSAT PERNIAGAAN MATAHARI SDN BHD pada minggu ke-34 tahun 2025 dari 18 hingga 20 Ogos</p>

          <label htmlFor="search" className="mt-[52px] block pl-8 text-[38px] font-semibold leading-[56px] text-[#437eeb]">Carian nama barang</label>
          <div className="ml-6 mr-6 mt-2 flex h-[72px] overflow-hidden rounded-xl border-2 border-[#e2e8f0] shadow-sm">
            <span className="flex w-[108px] shrink-0 items-center justify-center border-r-4 border-[#e2e8f0] bg-[#f1f5fb] text-[#0f172a]">
              <svg viewBox="0 0 34 34" className="h-[34px] w-[34px]" fill="none" stroke="currentColor" strokeWidth="3" strokeLinecap="round"><circle cx="13.5" cy="13.5" r="12" /><path d="M22 22l10 10" /></svg>
            </span>
            <input id="search" type="text" className="min-w-0 flex-1 bg-white px-4 text-[28px] outline-none" />
          </div>

          <div className="mt-[70px] flex gap-16 pb-4">
            <Group title="Kumpulan Barangan" cols="grid-cols-2" items={[["BARANGAN BERBUNGKUS", 52], ["BARANGAN KERING", 12]]} />
            <Group title="Kategori Barangan" cols="grid-cols-3" items={[["AYAM", 4], ["BAHAN LAUT", 9], ["BUAH-BUAHAN", 15]]} />
          </div>
        </section>
      </main>

      <button className="fixed bottom-0 right-[50px] h-[68px] w-[198px] rounded-t-xl bg-[#b600b6] font-['Roboto',sans-serif] text-[32px] font-bold leading-10 text-white shadow-[0_0_12px_rgba(0,0,0,0.5)]">Feedback</button>
    </div>
  );
}
